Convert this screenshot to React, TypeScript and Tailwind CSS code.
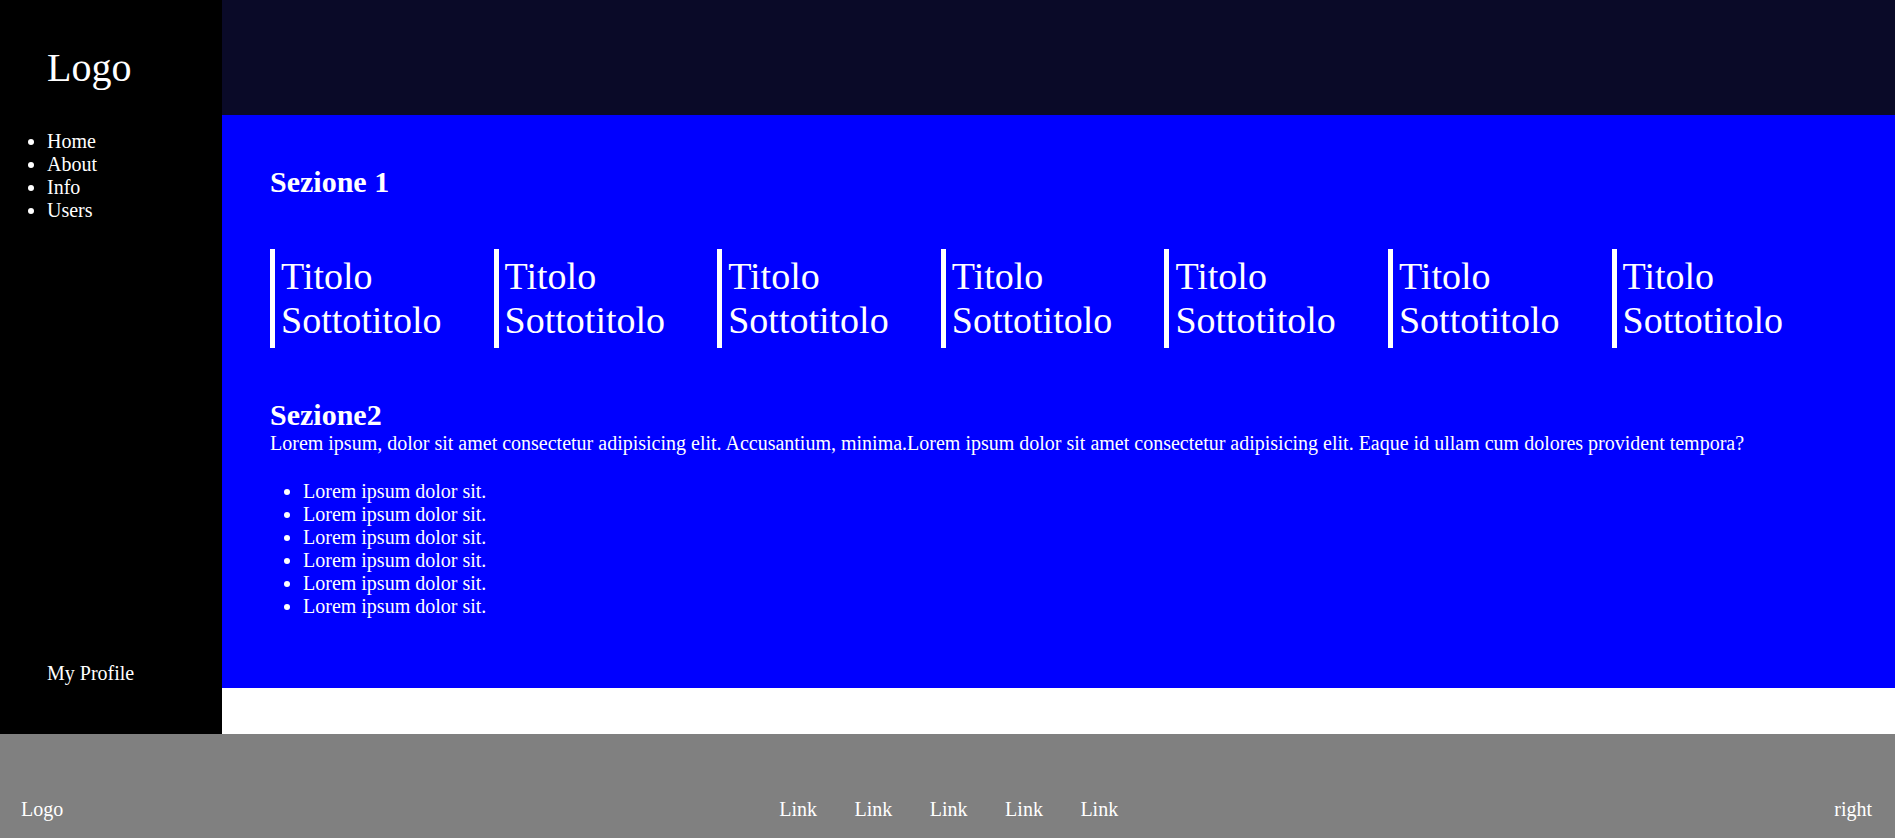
export default function App() {
  const cards = [1, 2, 3, 4, 5, 6, 7]
  const items = [1, 2, 3, 4, 5, 6]
  const links = ['Link', 'Link', 'Link', 'Link', 'Link']

  return (
    <div className="font-['Liberation_Serif',serif] text-[20px] leading-[23px] text-white bg-white">
      <div className="flex h-[734px]">
        {/* sidebar */}
        <aside className="w-[222px] shrink-0 bg-black flex flex-col pl-[47px]">
          <div className="mt-[45px] text-[40px] leading-[46px]">Logo</div>
          <ul className="mt-[39px] list-disc">
            <li>Home</li>
            <li>About</li>
            <li>Info</li>
            <li>Users</li>
          </ul>
          <div className="mt-auto mb-[49px]">My Profile</div>
        </aside>

        <main className="flex-1 flex flex-col">
          <header className="h-[115px] bg-[#0a0a28]" />
          <section className="bg-[#0000ff] h-[573px] pl-[48px] pt-[50px]">
            <h2 className="text-[30px] leading-[34px] font-bold">Sezione 1</h2>
            <div className="mt-[50px] grid grid-cols-[repeat(7,223.6px)]">
              {cards.map((c) => (
                <div key={c} className="border-l-[5px] border-white pl-[6px] py-[6px] text-[38px] leading-[43.5px]">
                  <div>Titolo</div>
                  <div>Sottotitolo</div>
                </div>
              ))}
            </div>
            <h2 className="mt-[50px] text-[30px] leading-[34px] font-bold">Sezione2</h2>
            <p>
              Lorem ipsum, dolor sit amet consectetur adipisicing elit. Accusantium, minima.Lorem ipsum dolor sit amet consectetur adipisicing elit. Eaque id ullam cum dolores provident tempora?
            </p>
            <ul className="mt-[25px] list-disc pl-[33px]">
              {items.map((i) => (
                <li key={i}>Lorem ipsum dolor sit.</li>
              ))}
            </ul>
          </section>
        </main>
      </div>

      <footer className="h-[104px] bg-[#808080] flex items-end justify-between pl-[21px] pr-[23px] pb-[17px]">
        <div>Logo</div>
        <div className="flex gap-[37.5px]">
          {links.map((l, i) => (
            <a key={i} href="#">{l}</a>
          ))}
        </div>
        <div>right</div>
      </footer>
    </div>
  )
}
